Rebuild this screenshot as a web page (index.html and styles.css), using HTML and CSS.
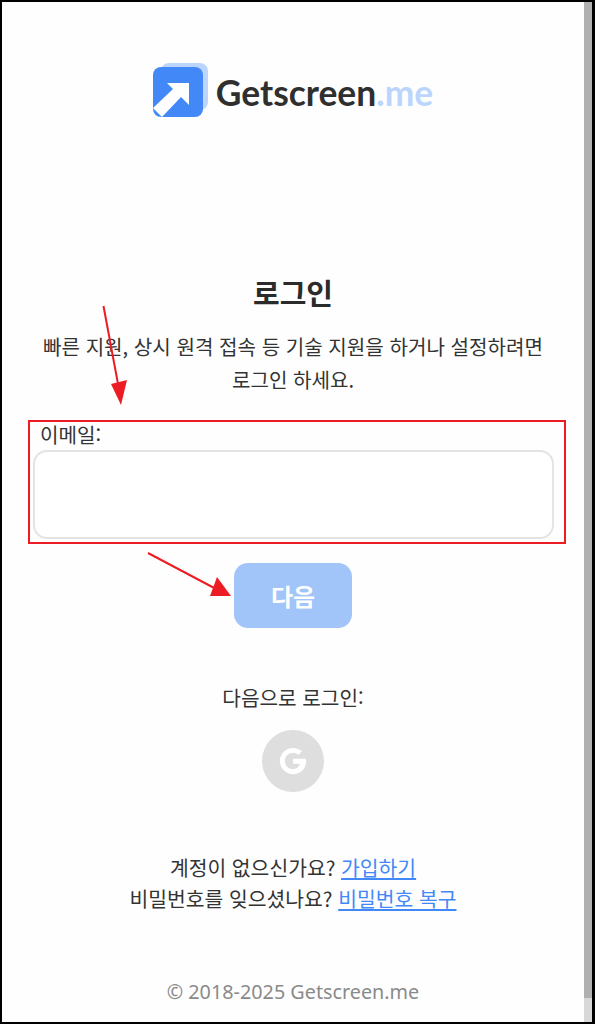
FILE: index.html
```html
<!DOCTYPE html>
<html lang="ko">
<head>
<meta charset="utf-8">
<title>로그인 - Getscreen.me</title>
<link rel="stylesheet" href="styles.css">
</head>
<body>
<div class="frame">
  <main class="page">
    <div class="logo">
      <svg class="logo-mark" viewBox="0 0 55 54" width="55" height="54" aria-hidden="true">
        <rect x="8" y="0" width="47" height="47" rx="8" fill="#bcd5fd"/>
        <rect x="0" y="4" width="50" height="50" rx="8" fill="#4288f7"/>
        <path d="M14 20H36V42L28 34L9 54L0 45L20 26Z" fill="#fff"/>
      </svg>
      <span class="logo-text">Getscreen<span class="logo-me">.me</span></span>
    </div>
    <h1 class="title">로그인</h1>
    <p class="intro">빠른 지원, 상시 원격 접속 등 기술 지원을 하거나 설정하려면<br>로그인 하세요.</p>
    <form class="form">
      <label class="label" for="email">이메일:</label>
      <input class="input" id="email" type="email">
      <button class="next" type="button">다음</button>
    </form>
    <p class="via">다음으로 로그인:</p>
    <div class="google">
      <svg viewBox="0 0 32 32" width="30" height="30" aria-hidden="true">
        <path d="M29.500 13.500H16V19H23.400C22.400 22.500 19.500 24.700 16 24.700C11.200 24.700 7.300 20.800 7.300 16C7.300 11.200 11.200 7.300 16 7.300C18.200 7.300 20.100 8.100 21.600 9.500L25.500 5.600C23 3.300 19.700 2 16 2C8.300 2 2 8.300 2 16C2 23.700 8.300 30 16 30C23.700 30 30 24.500 30 16.500C30 15.500 29.800 14.500 29.500 13.500Z" fill="#fff"/>
      </svg>
    </div>
    <div class="links">
      <p>계정이 없으신가요? <a href="#">가입하기</a></p>
      <p>비밀번호를 잊으셨나요? <a href="#">비밀번호 복구</a></p>
    </div>
    <footer class="copy">© 2018-2025 Getscreen.me</footer>
  </main>
  <div class="scrollbar"><div class="thumb"></div></div>
  <div class="mark-box"></div>
  <svg class="arrows" viewBox="0 0 595 1024" width="595" height="1024" aria-hidden="true">
    <path d="M103.500 306L118 384" stroke="#ed1c24" stroke-width="2" fill="none"/>
    <path d="M111 384L127 380L121 405Z" fill="#ed1c24"/>
    <path d="M148 553L218 590" stroke="#ed1c24" stroke-width="2" fill="none"/>
    <path d="M217 577L231 596L210 596Z" fill="#ed1c24"/>
  </svg>
</div>
</body>
</html>
```
FILE: styles.css
```css
* { box-sizing: border-box; }
html, body { margin: 0; padding: 0; }
body {
  font-family: "Noto Sans CJK KR", "Noto Sans", sans-serif;
  color: #333;
  background: #fff;
}
.frame {
  position: relative;
  width: 595px;
  height: 1024px;
  display: flex;
  border: 2px solid #000;
  border-right-width: 3px;
  overflow: hidden;
}
.page {
  flex: 1;
  min-width: 0;
  display: flex;
  flex-direction: column;
  align-items: center;
  text-align: center;
  background: #fefefe;
}
.scrollbar {
  width: 8px;
  background: #b0b0b0;
  display: flex;
  align-items: flex-end;
}
.thumb { width: 100%; height: 24px; background: #d8d8d8; }
.logo {
  display: flex;
  align-items: center;
  gap: 8px;
  margin-top: 61px;
  height: 54px;
}
.logo-mark { display: block; }
.logo-text {
  margin-top: 5px;
  font-family: Lato, sans-serif;
  font-weight: 700;
  font-size: 35.4px;
  line-height: 54px;
  color: #2f2f2f;
}
.logo-me { color: #bcd5fd; }
.title {
  margin: 155px 0 0;
  font-size: 29px;
  line-height: 40px;
  font-weight: 700;
  color: #2b2b2b;
}
.intro {
  margin: 18px 0 0;
  font-size: 20.1px;
  line-height: 33px;
}
.form {
  align-self: stretch;
  display: flex;
  flex-direction: column;
  align-items: center;
  margin-top: 24px;
}
.label {
  align-self: flex-start;
  margin-left: 38px;
  padding-top: 2px;
  font-size: 20.1px;
  line-height: 26px;
}
.input {
  display: block;
  width: 521px;
  height: 89px;
  margin: 2px 0 0;
  border: 2px solid #e4e4e4;
  border-radius: 14px;
  background: #fff;
}
.next {
  width: 118px;
  height: 65px;
  margin-top: 24px;
  border: 0;
  border-radius: 14px;
  background: #a1c4f9;
  color: #fff;
  font: 700 24px "Noto Sans CJK KR", sans-serif;
}
.via {
  margin: 57px 0 0;
  font-size: 20.2px;
  line-height: 26px;
}
.google {
  width: 62px;
  height: 62px;
  margin-top: 19px;
  border-radius: 50%;
  background: #dedede;
  display: flex;
  align-items: center;
  justify-content: center;
}
.links {
  margin-top: 60px;
  font-size: 20.4px;
  line-height: 31px;
}
.links p { margin: 0; }
.links a { color: #4288f7; text-decoration: underline; }
.copy {
  margin-top: 65px;
  font-family: "Noto Sans", sans-serif;
  font-size: 19.8px;
  line-height: 26px;
  color: #8a8a8a;
}
.mark-box {
  position: absolute;
  left: 26px;
  top: 418px;
  width: 538px;
  height: 124px;
  border: 2px solid #ed1c24;
  pointer-events: none;
}
.arrows {
  position: absolute;
  left: -2px;
  top: -2px;
  pointer-events: none;
}
```
